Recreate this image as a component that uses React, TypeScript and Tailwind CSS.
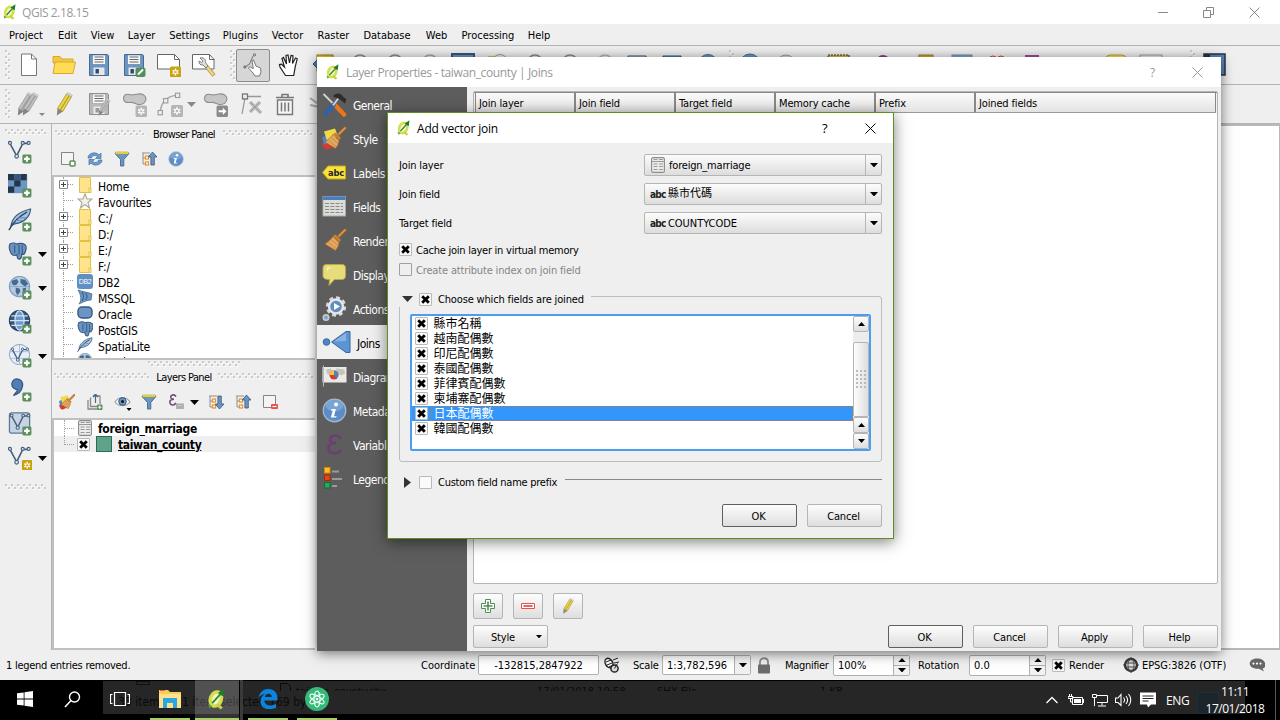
import React, { ReactNode } from "react";

type P = { children?: ReactNode };

/* ---------- primitives ---------- */

function I({ w = 24, h, v = "0 0 24 24", c = "", children }: { w?: number; h?: number; v?: string; c?: string; children?: ReactNode }) {
  return (
    <svg width={w} height={h ?? w} viewBox={v} className={"block shrink-0 " + c} fill="none">
      {children}
    </svg>
  );
}

function HGrip({ w, id }: { w: number; id: string }) {
  return (
    <svg width={w} height="7" className="block shrink-0">
      <defs>
        <pattern id={id} width="6" height="7" patternUnits="userSpaceOnUse">
          <rect x="0" y="0" width="2" height="2" fill="#cbcbcb" />
          <rect x="1" y="2" width="2" height="1" fill="#fff" />
          <rect x="3" y="3" width="2" height="2" fill="#cbcbcb" />
          <rect x="4" y="5" width="2" height="1" fill="#fff" />
        </pattern>
      </defs>
      <rect width={w} height="7" fill={"url(#" + id + ")"} />
    </svg>
  );
}

function VGrip({ id, c = "" }: { id: string; c?: string }) {
  return (
    <svg width="6" height="30" className={"block shrink-0 " + c}>
      <defs>
        <pattern id={id} width="6" height="6" patternUnits="userSpaceOnUse">
          <rect x="0" y="0" width="2" height="2" fill="#cbcbcb" />
          <rect x="1" y="2" width="2" height="1" fill="#fff" />
          <rect x="3" y="3" width="2" height="2" fill="#cbcbcb" />
          <rect x="4" y="5" width="2" height="1" fill="#fff" />
        </pattern>
      </defs>
      <rect width="6" height="30" fill={"url(#" + id + ")"} />
    </svg>
  );
}

function Down({ w = 9, f = "#000", c = "" }: { w?: number; f?: string; c?: string }) {
  return (
    <svg width={w} height={(w + 1) / 2} viewBox="0 0 10 5.5" className={"block shrink-0 " + c}>
      <path d="M0 0h10L5 5.5z" fill={f} />
    </svg>
  );
}
function Up({ w = 9, c = "" }: { w?: number; c?: string }) {
  return (
    <svg width={w} height={(w + 1) / 2} viewBox="0 0 10 5.5" className={"block shrink-0 " + c}>
      <path d="M0 5.5h10L5 0z" fill="#000" />
    </svg>
  );
}

function Check({ on = true, dim = false }: { on?: boolean; dim?: boolean }) {
  return (
    <span className={"flex h-[13px] w-[13px] shrink-0 items-center justify-center rounded-[1px] border " + (dim ? "border-[#a0a0a0] bg-[#efefef]" : "border-[#b9b9b9] bg-[#fafafa]")}>
      {on && (
        <I w={9} v="0 0 9 9">
          <path d="M1.2 1.2l6.6 6.6M7.8 1.2L1.2 7.8" stroke="#000" strokeWidth="2.8" />
        </I>
      )}
    </span>
  );
}

function Btn({ children, c = "", def = false }: P & { c?: string; def?: boolean }) {
  return (
    <div
      className={
        "flex shrink-0 items-center justify-center rounded-[2px] border bg-linear-to-b from-[#fdfdfd] to-[#dedede] " +
        (def ? "border-[#5f5f5f] " : "border-[#b5b5b5] ") + c
      }
    >
      {children}
    </div>
  );
}

/* ---------- shared icons ---------- */

const Qgis = ({ w = 16 }: { w?: number }) => (
  <I w={w} v="0 0 16 16">
    <ellipse cx="7.2" cy="8" rx="3.9" ry="5.3" transform="rotate(22 7.2 8)" stroke="#d3df4e" strokeWidth="2.6" fill="#f4f7c4" />
    <path d="M8 12l3.500 2.800" stroke="#c3d23c" strokeWidth="2.2" />
    <path d="M4.500 11L10.500 4.500" stroke="#2c8a3c" strokeWidth="1.300" />
    <path d="M8.600 3.600L13.500.3l-.8 5.900-1.600-1z" fill="#1d7a2c" />
    <path d="M1.500 11.500l1 3.200 2-1.500z" fill="#5aa04a" />
  </I>
);

const Plus = ({ x = 15, y = 15, c = "#5b8f5b" }: { x?: number; y?: number; c?: string }) => (
  <g>
    <rect x={x} y={y} width="9.4" height="9.4" rx="1.5" fill={c} />
    <path d={`M${x + 4.7} ${y + 1.8}v5.8M${x + 1.8} ${y + 4.7}h5.8`} stroke="#fff" strokeWidth="2.2" />
  </g>
);
const Star = ({ x = 14, y = 13, c = "#c9a30f" }: { x?: number; y?: number; c?: string }) => (
  <g>
    <rect x={x} y={y} width="11" height="11" rx="1.5" fill={c} />
    <path d={`M${x + 5.5} ${y + 2}v7M${x + 2.5} ${y + 3.8}l6 3.4M${x + 8.5} ${y + 3.8}l-6 3.4`} stroke="#fff" strokeWidth="1.5" />
    <circle cx={x + 5.5} cy={y + 5.5} r="1.1" fill={c} />
  </g>
);
const Floppy = ({ g = false }: { g?: boolean }) => {
  const a = g ? "#b8b8b8" : "#6b95c4";
  const b = g ? "#8f8f8f" : "#45698f";
  return (
    <g>
      <path d="M2.500 1.500h18l1 1v20h-19z" fill={a} stroke={b} />
      <rect x="5.500" y="2" width="13" height="9.500" fill="#f8f8f8" stroke={b} strokeWidth=".5" />
      <path d="M7.500 4h9M7.500 6.500h9M7.500 9h9" stroke="#666" strokeWidth="1" />
      <rect x="6.500" y="14.500" width="11" height="7.500" fill="#e8e8e8" />
      <rect x="8.500" y="16" width="3.400" height="4.500" fill={g ? "#999" : "#2d4a6b"} />
    </g>
  );
};
const Pencil = ({ g = false }: { g?: boolean }) => (
  <g>
    <path d="M5.500 16.500L14.500 2l5 2.800-8.700 14.600z" fill={g ? "#c0c0c0" : "#ead54a"} stroke={g ? "#979797" : "#a58e26"} strokeWidth=".8" />
    <path d="M8.300 18L17.300 3.500" stroke={g ? "#9a9a9a" : "#b5a02a"} strokeWidth="1.300" />
    <path d="M14.500 2l1-1.600 5 2.800-1 1.600z" fill="#d5d5d5" stroke="#a5a5a5" strokeWidth=".4" />
    <path d="M5.500 16.500l5.300 2.900-6 4.200z" fill="#858585" />
  </g>
);
const VNodes = () => (
  <g stroke="#44607e" strokeWidth="1.700">
    <path d="M2 3.500L9 16.500 15.500 3.500H21" />
    <circle cx="2" cy="3" r="1.600" fill="#dce6f0" strokeWidth="1.200" />
    <circle cx="9" cy="17" r="1.900" fill="#dce6f0" strokeWidth="1.200" />
    <circle cx="15.300" cy="3" r="1.600" fill="#dce6f0" strokeWidth="1.200" />
    <circle cx="21.500" cy="3" r="1.600" fill="#dce6f0" strokeWidth="1.200" />
  </g>
);
const Elephant = () => (
  <g>
    <path d="M2 2c3-1.600 6-1 7 .2C11 1 16 1 18 3c2 2.400.3 8-1.600 10l-2-.4c-.6 2.200.2 5-2.600 5.200-2.400 0-2.400-2.500-2.400-4.600C7.800 14 6 14 5 13.500 2.500 12 .2 6 2 2z" fill="#6a93c2" stroke="#35577e" strokeWidth="1.200" />
    <path d="M7 3.500v8M11.500 3v10M14.500 3.500c1 3 0 6 .5 9" stroke="#35577e" strokeWidth="1.100" />
  </g>
);
const Feather = () => (
  <g>
    <path d="M3 19C4 11 10 4 23.500 1 23 9 17 15 7 16.500z" fill="#a9c3df" stroke="#35577e" strokeWidth="1.200" />
    <path d="M1 23C5 15 11 9 20 4" stroke="#2d4a6b" strokeWidth="1.500" />
    <path d="M8 13l8 0M10.500 10.500l8-.5" stroke="#6a93c2" strokeWidth="1.200" />
  </g>
);
const Globe = ({ dark = false }: { dark?: boolean }) => (
  <g>
    <circle cx="12" cy="11" r="10.500" fill={dark ? "#35587f" : "#b6cbe2"} stroke={dark ? "#29415f" : "#7f9fc4"} strokeWidth="1.300" />
    {dark ? (
      <g stroke="#d6e3f2" strokeWidth="1.300">
        <ellipse cx="12" cy="11" rx="4.800" ry="10" fill="#6d9bd0" />
        <path d="M2 11h20M3.500 6h17M3.500 16h17" />
      </g>
    ) : (
      <g fill="#45698f">
        <path d="M4 5l5-2 2 3-2 3-3 1-2-2zM13 3l5 1 3 4-3 3-3-2-2-2zM8 12l4 1 1 3-3 4-2-3zM15 13l4-1-1 5-2 0z" />
        <path d="M1.500 11h21" stroke="#7f9fc4" strokeWidth=".8" />
      </g>
    )}
  </g>
);
const Funnel = ({ w = 16 }: { w?: number }) => (
  <I w={w} v="0 0 16 16">
    <path d="M1 2.500h14L9.800 8.500V15H6.500V8.500z" fill="#6b95c4" stroke="#45698f" strokeWidth=".9" />
    <path d="M1.500 1h13v2h-13z" fill="#f3e54a" stroke="#a79c2a" strokeWidth=".6" />
  </I>
);
const TreeArrow = ({ up = false }: { up?: boolean }) => (
  <I w={16} v="0 0 16 16">
    <path d="M1 2h8M2 2v11h4M2 7h4" stroke="#8e8e8e" />
    <rect x="4.500" y="5" width="3" height="3" fill="#fff" stroke="#f0922b" strokeWidth="1.200" />
    <rect x="4.500" y="11" width="3" height="3" fill="#fff" stroke="#f0922b" strokeWidth="1.200" />
    {up ? <path d="M11.500 1L16 6h-2.700v8h-3.400V6H7.300z" fill="#6b95c4" stroke="#35577e" strokeWidth=".8" /> : <path d="M11.500 15L16 10h-2.700V2h-3.400v8H7.300z" fill="#6b95c4" stroke="#35577e" strokeWidth=".8" />}
  </I>
);
const Info = ({ w = 16 }: { w?: number }) => (
  <I w={w} v="0 0 24 24">
    <circle cx="12" cy="12" r="10.800" fill="#5b8cc6" stroke="#a5b6cb" strokeWidth="1.300" />
    <ellipse cx="12" cy="7.500" rx="8.500" ry="5.500" fill="#85acd9" opacity=".7" />
    <circle cx="13.500" cy="6.300" r="1.900" fill="#fff" />
    <path d="M9 10.500h4.300L11.500 17.500h2.500l-.4 1.300H8.500L10.300 12H8.700z" fill="#fff" />
  </I>
);
const Brush = ({ colors = false }: { colors?: boolean }) => (
  <g>
    {colors && (
      <g>
        <path d="M0 17l7-5 6 8-8 3.500-3-2z" fill="#d33b32" />
        <path d="M0 11l7-4 5 8-10 3z" fill="#4f82c4" />
        <path d="M2 5L13 2l3 8-11 4z" fill="#f1d94a" />
      </g>
    )}
    <path d="M23 1.500L17 7.500" stroke="#b36a22" strokeWidth="3" strokeLinecap="round" />
    <path d="M23 1.500L17 7.500" stroke="#e09a4a" strokeWidth="1.500" strokeLinecap="round" />
    <path d="M13.500 6l5.500 5.500-1.800 2-6.200-6z" fill="#c98135" />
    <path d="M11 8l6 6c0 3-1.500 5-3.500 8L3 15.500c3-2 5.500-4.500 8-7.500z" fill="#e3a862" stroke="#a86a2a" strokeWidth=".8" />
    <path d="M6.500 14l7.500 6M9 11l7 6" stroke="#c07f3a" strokeWidth=".8" />
  </g>
);
const TableIcon = ({ w = 14, h = 16 }: { w?: number; h?: number }) => (
  <I w={w} h={h} v="0 0 14 16">
    <rect x=".6" y=".6" width="12.800" height="14.800" rx="1.500" fill="#ececea" stroke="#8c8c8c" strokeWidth="1.100" />
    <path d="M1 4.500h12" stroke="#999" />
    <path d="M2.500 2.500h4M8 2.500h4M2.500 7h4M8 7h4M2.500 9.500h4M8 9.500h4M2.500 12.500h4M8 12.500h4" stroke="#999" strokeWidth="1" />
  </I>
);
const Folder = () => (
  <I w={16} h={16} v="0 0 16 16">
    <path d="M2.500.5h11v15h-11z" fill="#ffe48c" stroke="#e3bf45" />
    <path d="M12 11h2v4.500h-2z" fill="#fff0b5" stroke="#e3bf45" />
  </I>
);

/* ---------- main window ---------- */

const menus: [string, string][] = [
  ["Project", "w-[50px]"], ["Edit", "w-[33px]"], ["View", "w-[37px]"], ["Layer", "w-[41px]"], ["Settings", "w-[55px]"],
  ["Plugins", "w-[47px]"], ["Vector", "w-[47px]"], ["Raster", "w-[45px]"], ["Database", "w-[62px]"], ["Web", "w-[37px]"],
  ["Processing", "w-[66px]"], ["Help", "w-[36px]"],
];

const Slot = ({ children, c = "w-[35px]" }: P & { c?: string }) => <div className={"flex h-full shrink-0 items-center justify-center " + c}>{children}</div>;

const Lens = ({ c }: { c: string }) => (
  <Slot>
    <I><circle cx="14" cy="9.500" r="7.500" fill="#eee" stroke={c} strokeWidth="1.500" /><path d="M9 15l-6 7" stroke={c} strokeWidth="3" /></I>
  </Slot>
);

function ToolbarOne() {
  return (
    <div className="flex h-[39px] w-[1280px] shrink-0 items-center overflow-hidden border-b border-[#b4b4b4] bg-[#efefef] pl-[5px]">
      <VGrip id="v1" />
      <Slot><I><path d="M4.500 1h10l5 5v16.500h-15z" fill="#fff" stroke="#777" /><path d="M14.500 1v5h5" stroke="#777" /></I></Slot>
      <Slot><I><path d="M1 3.500h7l2 2.500h11v4H1z" fill="#f5c63f" stroke="#d9a82e" /><path d="M1 20.500L3 9h20.500L21 20.500z" fill="#ffdc55" stroke="#d9a82e" /></I></Slot>
      <Slot><I><Floppy /></I></Slot>
      <Slot><I><Floppy /><rect x="13.500" y="14.500" width="10" height="9.500" rx="2" fill="#4f9158" /><path d="M16 21.500l5-5" stroke="#fff" strokeWidth="2" /></I></Slot>
      <Slot><I><path d="M.5 1.500h17l5 5v9.500h-22z" fill="#fff" stroke="#666" /><path d="M17.500 1.500v5h5" stroke="#666" /><Star x={13} y={13.500} /></I></Slot>
      <Slot><I><path d="M.5 1.500h17l4.500 5v9.500h-21.500z" fill="#fff" stroke="#666" /><path d="M17.500 1.500v5h5" stroke="#666" /><path d="M14 13l8 9.500" stroke="#b89a4a" strokeWidth="4" /><path d="M14.500 13.500l7 8.500" stroke="#f1d98c" strokeWidth="2" /><path d="M8 5c3-1 6 1 5.500 4.500L16 13l-2 2-3-3C8 12.500 6.500 10 7 8l2.500 1.500L11 8z" fill="#ddd" stroke="#666" strokeWidth=".8" /></I></Slot>
      <VGrip id="v2" c="ml-[9px]" />
      <div className="flex h-[33px] w-[34px] shrink-0 items-center justify-center rounded-[2px] border border-[#8c8c8c] bg-[#d6d6d6]">
        <I c="ml-[3px]"><path d="M1.500 14.500l5-3.500 3.500-8" stroke="#888" strokeWidth="1.200" /><circle cx="1.800" cy="14" r="1.100" stroke="#666" /><circle cx="11.500" cy="1.800" r="1.100" stroke="#666" /><path d="M10 20L5.500 15l1.300-1.300 3.500 2L9 7.500l1.500-.5L13 13l4.500 2 .5 4-1.500 4h-4.500z" fill="#fff" stroke="#777" strokeWidth="1" /></I>
      </div>
      <Slot c="w-[37px]"><I><path d="M8.500 22.500L3 14l-.500-2.500 2-.3L7.500 14 5 5.500l1.500-1L9.500 11 9 2.500 11 2l1.500 8L14 2.500l2 .3-.5 7.700L18.500 5l1.700.800-2 8-1.500 8.700z" fill="#fff" stroke="#222" strokeWidth="1.200" /></I></Slot>
      <Slot c="w-[33px]"><I><rect x="5" y="2" width="16" height="16" fill="#e9c52c" stroke="#8d7415" /><path d="M1 11l6-6v4h6v4H7v4z" fill="#4d7ab0" stroke="#2c4f78" /></I></Slot>
      <Lens c="#8a8a8a" /><Lens c="#8a8a8a" /><Lens c="#a5a5a5" />
      <Slot><I><path d="M1 1h22v20H1z" fill="#6b95c4" stroke="#35577e" strokeWidth="2" /></I></Slot>
      <Slot><I><rect x="2" y="3" width="12" height="12" fill="#e3c53a" /><circle cx="14" cy="9" r="7.500" fill="#eee" stroke="#999" /></I></Slot>
      <Lens c="#8a8a8a" /><Lens c="#8a8a8a" /><Lens c="#b5b5b5" />
      <Slot><I><path d="M2 3h18v16H2z" fill="#ddd" stroke="#35577e" /></I></Slot>
      <Slot><I><path d="M2 3h18v16H2z" fill="#6b95c4" stroke="#35577e" /></I></Slot>
      <Slot><I><circle cx="12" cy="11" r="9.500" fill="#6b95c4" stroke="#45698f" /></I></Slot>
      <VGrip id="v3" c="mr-[-2px] ml-[4px]" />
      <Slot><I><circle cx="11" cy="11" r="10" fill="#6b95c4" stroke="#45698f" /></I></Slot>
      <Slot><I><circle cx="12" cy="11" r="9" fill="#ddd" stroke="#999" /></I></Slot>
      <Slot c="ml-[18px] w-[35px]"><I><rect x="1" y="2" width="21" height="18" fill="#d8bd45" stroke="#333" strokeDasharray="2 1" /></I></Slot>
      <Slot c="ml-[9px] w-[35px]"><I><circle cx="12" cy="9" r="6" stroke="#7b4a7b" strokeWidth="2" /></I></Slot>
      <Slot c="ml-[9px] w-[35px]"><I><rect x="4" y="2" width="14" height="18" fill="#cfae2c" stroke="#9c821c" /></I></Slot>
      <Slot c="w-[35px]"><I><rect x="2" y="2" width="20" height="18" fill="#83a8d2" stroke="#6b8bb0" /></I></Slot>
      <Slot><I><circle cx="8" cy="7" r="4" stroke="#c44" /><circle cx="16" cy="7" r="4" stroke="#c44" /></I></Slot>
      <Slot><I><rect x="5" y="2" width="14" height="18" fill="#a548a0" /></I></Slot>
      <Slot c="ml-[49px] w-[35px]"><I><rect x="2" y="2" width="20" height="16" rx="4" fill="#f0df80" stroke="#c9a30f" /></I></Slot>
      <Slot><I><rect x="1" y="2" width="22" height="18" fill="#e7ece9" stroke="#999" /></I></Slot>
      <VGrip id="v4" c="ml-[22px]" />
      <Slot><I><path d="M2 1h21v21H2z" fill="#5c86b8" stroke="#26354a" strokeWidth="1.500" /><path d="M2 1h6v21H2z" fill="#26354a" /></I></Slot>
    </div>
  );
}

function ToolbarTwo() {
  return (
    <div className="flex h-[39px] w-[1280px] shrink-0 items-center overflow-hidden border-b border-[#b4b4b4] bg-[#efefef] pl-[5px]">
      <VGrip id="v5" />
      <Slot><I w={28} v="0 0 28 24" c="ml-[4px]"><g transform="translate(-4 0)"><Pencil g /></g><g transform="translate(1 0)"><Pencil g /></g><path d="M22 21h6l-3 3z" fill="#888" /></I></Slot>
      <Slot><I><Pencil /></I></Slot>
      <Slot><I><Floppy g /><g transform="translate(8 6) scale(.75)"><Pencil g /></g></I></Slot>
      <Slot c="w-[36px]"><I w={25}><path d="M1.500 7C1 3 4 1.500 7 2.500c3 1 5 0 8-.5 4-.8 8 1 8 4.500s-3 6-7 5.500c-3-.5-5-2.500-8-2-3 .3-6 0-6.500-3z" fill="#c6c6c6" stroke="#8b8b8b" /><Star x={13} y={13} c="#b5b5b5" /></I></Slot>
      <Slot><I w={26}><path d="M3 19C4 11 9 5 18 4" stroke="#aaa" strokeWidth="1.400" /><rect x="1" y="18" width="4" height="4" fill="#eee" stroke="#999" /><rect x="6" y="7" width="4" height="4" fill="#eee" stroke="#999" /><rect x="17" y="2" width="4" height="4" fill="#eee" stroke="#999" /><Star x={13} y={13} c="#b5b5b5" /></I></Slot>
      <Down w={9} f="#888" />
      <Slot c="ml-[2px] w-[35px]"><I w={25}><path d="M1.500 7C1 3 4 1.500 7 2.500c3 1 5 0 8-.5 4-.8 8 1 8 4.500s-3 6-7 5.500c-3-.5-5-2.500-8-2-3 .3-6 0-6.500-3z" fill="#c6c6c6" stroke="#8b8b8b" /><rect x="13" y="13" width="11" height="11" rx="1.500" fill="#8b8b8b" /><path d="M15 17.500h4v-2.500l3.500 3.500-3.500 3.500v-2.500h-4z" fill="#fff" /></I></Slot>
      <Slot><I><path d="M3 22L6 6M8 4.500h14" stroke="#999" strokeWidth="1.300" /><rect x="3.500" y="2" width="5" height="5" stroke="#777" strokeWidth="1.300" /><path d="M11 20L21 10M11 10l11 11" stroke="#bdbdbd" strokeWidth="3.500" /><path d="M11 20L21 10M11 10l11 11" stroke="#999" strokeWidth="1" /></I></Slot>
      <Slot c="w-[34px]"><I><path d="M4.500 8h15v14.500h-15z" fill="#f4f4f4" stroke="#777" strokeWidth="1.400" /><path d="M3 5.500h18M9 5.500V2.500h6v3" stroke="#777" strokeWidth="1.600" /><path d="M8.500 10.500v9M12 10.500v9M15.500 10.500v9" stroke="#777" strokeWidth="1.500" /></I></Slot>
      <Slot><I><path d="M2 6l14 10M2 13l14 3" stroke="#aaa" strokeWidth="2" /></I></Slot>
    </div>
  );
}

function SideTools() {
  const items: [ReactNode, boolean][] = [
    [<><VNodes /><Plus /></>, false],
    [<><path d="M0 0h20v20H0z" fill="#6b95c4" /><path d="M0 0h6.500v6.500H0zM13 0h6.500v6.500H13zM6.500 6.500H13V13H6.500zM0 13h6.500v6.500H0z" fill="#26354a" /><path d="M6.500 0H13v6.500H6.500z" fill="#35577e" /><Plus /></>, false],
    [<><Feather /><Plus /></>, false],
    [<><Elephant /><Plus /></>, true],
    [<><Globe /><Plus /></>, true],
    [<><Globe dark /><Plus /></>, false],
    [<><circle cx="12" cy="11" r="10.500" fill="#e9eff6" stroke="#7f9fc4" /><path d="M2 8h20M2 15h20M12 1v20" stroke="#a8bfda" /><g transform="translate(3 3) scale(.8)"><VNodes /></g><Plus /></>, true],
    [<><path d="M9 1c5 0 7 4 6 8-1 5-5 8-9 9-.5-1 4-3 4-6-3 0-6-2-6-5.500S6.500 1 9 1z" fill="#4f7fb5" stroke="#35577e" strokeWidth="1.300" /><Plus /></>, false],
    [<><rect x="1.500" y="1" width="21" height="21" rx="2" fill="#c7d4e3" stroke="#5c7693" strokeWidth="1.300" /><g transform="translate(2 1) scale(.9)"><VNodes /></g><Plus /></>, false],
    [<><VNodes /><Star x={14.500} y={14.500} /></>, true],
  ];
  return (
    <div className="flex w-[52px] shrink-0 flex-col border-r border-[#b4b4b4]">
      <div className="flex h-[11px] shrink-0 items-start pt-[5px] pl-[5px]"><HGrip w={41} id="s1" /></div>
      {items.map(([ic, dd], i) => (
        <div key={i} className="flex h-[34px] shrink-0 items-center pl-[8px]">
          <I w={24} v="0 0 25 25">{ic}</I>
          {dd && <Down c="ml-[6px]" />}
        </div>
      ))}
      <div className="mt-[9px] pl-[5px]"><HGrip w={41} id="s2" /></div>
    </div>
  );
}

const tree: [string, string, boolean][] = [
  ["Home", "f", true], ["Favourites", "star", false], ["C:/", "f", true], ["D:/", "f", true], ["E:/", "f", true], ["F:/", "f", true],
  ["DB2", "db2", false], ["MSSQL", "ms", false], ["Oracle", "ora", false], ["PostGIS", "pg", false], ["SpatiaLite", "sl", false], ["ArcGisFeatureServer", "arc", false],
];
const treeIcon: Record<string, ReactNode> = {
  f: <Folder />,
  star: <I w={16} v="0 0 16 16"><path d="M8 1l2 5h5l-4 3.500L12.500 15 8 11.500 3.500 15 5 9.500 1 6h5z" fill="#f2f2ea" stroke="#aaa995" strokeWidth="1.100" /></I>,
  db2: <div className="flex h-[15px] w-[16px] items-center justify-center rounded-[3px] bg-[#5f8fc4] font-['Liberation_Sans'] text-[7px] tracking-[-0.3px] text-white">DB2</div>,
  ms: <I w={16} v="0 0 16 16"><path d="M1 1c5 2 10 2 14 4l-1 6c-4 0-8 2-12 4 3-4 2-9-1-14z" fill="#6b95c4" stroke="#45698f" strokeWidth=".8" /><path d="M5 3c2 3 2 6 0 9M8.500 4c2 2 2 5 0 7" stroke="#2f527b" /></I>,
  ora: <I w={16} v="0 0 16 16"><rect x="1" y="2" width="14" height="11" rx="4" fill="#6b95c4" stroke="#35577e" strokeWidth="1.400" /></I>,
  pg: <I w={16} v="0 0 19 19"><Elephant /></I>,
  sl: <I w={16} v="0 0 25 25"><Feather /></I>,
  arc: <I w={16} v="0 0 24 24"><Globe /></I>,
};

function Panels() {
  return (
    <div className="flex w-[263px] shrink-0 flex-col">
      <div className="flex h-[18px] shrink-0 items-center pl-[3px]">
        <HGrip w={90} id="p1" />
        <span className="w-[78px] pt-[2px] text-center tracking-[-0.6px]">Browser Panel</span>
        <HGrip w={90} id="p2" />
      </div>
      <div className="flex h-[33px] shrink-0 items-center gap-[11px] pl-[8px]">
        <I w={16} v="0 0 16 16"><path d="M1.500 1.500h12v12h-12z" fill="#f4f4f4" stroke="#858585" /><rect x="10" y="10" width="5" height="5" rx="1" fill="#fff" stroke="#5b8f5b" strokeWidth="1.500" /></I>
        <I w={16} v="0 0 16 16"><path d="M1 7c0-5 8-7 11-3l2-2v5.500H8.500l2-2C8.500 4 5 4 4.500 7z" fill="#6b9bd0" stroke="#45729f" strokeWidth=".7" /><path d="M15 9c0 5-8 7-11 3l-2 2V8.500h5.500l-2 2C7.500 12 11 12 11.500 9z" fill="#6b9bd0" stroke="#45729f" strokeWidth=".7" /></I>
        <Funnel />
        <TreeArrow up />
        <Info />
      </div>
      <div className="flex h-[185px] shrink-0 flex-col overflow-hidden border-2 border-r-0 border-[#c0c0c0] bg-white pl-[3px]">
        {tree.map(([t, ic, ex]) => (
          <div key={t} className="flex h-[16px] shrink-0 items-center">
            <div className="relative h-[16px] w-[20px] shrink-0">
              <div className="absolute top-0 left-[6px] h-[16px] border-l border-dotted border-[#a0a0a0]" />
              <div className="absolute top-[7px] left-[7px] w-[9px] border-t border-dotted border-[#a0a0a0]" />
              {ex && (
                <I w={9} v="0 0 9 9" c="absolute top-[3px] left-[2px]"><path d="M.5.5h8v8h-8z" fill="#fff" stroke="#888" /><path d="M2 4.500h5M4.500 2v5" stroke="#444" /></I>
              )}
            </div>
            {treeIcon[ic]}
            <span className="ml-[5px] pt-[4px] text-[12px] tracking-[-0.2px] whitespace-nowrap">{t}</span>
          </div>
        ))}
      </div>
      <div className="flex h-[9px] shrink-0 pt-[1px] pl-[96px]"><HGrip w={93} id="p3" /></div>
      <div className="flex h-[15px] shrink-0 items-center pl-[2px]">
        <HGrip w={96} id="p4" />
        <span className="w-[68px] pt-[2px] text-center tracking-[-0.6px]">Layers Panel</span>
        <HGrip w={95} id="p5" />
      </div>
      <div className="flex h-[34px] shrink-0 items-center pt-[2px] pl-[7px]">
        <I w={16} v="0 0 24 24" c="mr-[11px]"><Brush colors /></I>
        <I w={17} v="0 0 17 17" c="mr-[11px]"><path d="M2 6v9h9M4.500 3.500v9h8M7 2h7v8" stroke="#888" strokeWidth="1.300" /><path d="M9.500 0v9M7 3l2.500-3L12 3" stroke="#45698f" strokeWidth="1.200" /><rect x="11" y="10.500" width="5.500" height="5.500" rx="1" fill="#5b8f5b" /><path d="M12 13.200h3.500M13.700 11.500V15" stroke="#fff" /></I>
        <I w={18} v="0 0 18 18" c="mr-[9px]"><path d="M1 9c4-6 11-6 15 0-4 5-11 5-15 0z" fill="#fff" stroke="#999" strokeWidth="1.200" /><circle cx="8.500" cy="8.500" r="3.800" fill="#6b95c4" stroke="#35577e" /><circle cx="8.500" cy="8.500" r="1.500" fill="#111" /><path d="M12.500 15h5l-2.500 3z" fill="#000" /></I>
        <Funnel />
        <I w={17} v="0 0 17 17" c="mr-[5px] ml-[11px]"><path d="M8 2.500C6-.5 2 1 3 4c.5 1.200 2 1.300 3 1.300C3 5.300 1.500 6.500 2 9c1 3 4.500 2.500 6 0" stroke="#70497a" strokeWidth="1.600" /><path d="M9 15v-4.500h6V15M11 15v-2h2v2" stroke="#aaa" strokeWidth="1.800" /></I>
        <Down c="mr-[9px]" />
        <TreeArrow />
        <span className="w-[11px]" />
        <TreeArrow up />
        <I w={16} v="0 0 16 16" c="ml-[11px]"><path d="M1.500 1.500h12v12h-12z" fill="#f4f4f4" stroke="#858585" /><rect x="9" y="10" width="7" height="5" rx="1" fill="#e9504f" /><path d="M10.500 12.500h4" stroke="#fff" strokeWidth="1.200" /></I>
      </div>
      <div className="flex grow flex-col border-2 border-r-0 border-[#c0c0c0] bg-white text-[12px] font-bold tracking-[-0.35px]">
        <div className="flex h-[16px] items-center pl-[10px]">
          <div className="h-[16px] border-l border-dotted border-[#a0a0a0]" />
          <div className="mr-[4px] w-[9px] border-t border-dotted border-[#a0a0a0]" />
          <TableIcon w={14} h={16} />
          <span className="ml-[6px] pt-[2px] leading-[17px]">foreign_marriage</span>
        </div>
        <div className="flex h-[16px] items-center bg-[#efefef] pl-[10px]">
          <div className="h-[9px] w-[10px] self-start border-b border-l border-dotted border-[#a0a0a0]" />
          <span className="ml-[3px]"><Check /></span>
          <span className="ml-[6px] h-[16px] w-[16px] border border-[#2f6a58] bg-[#5fa389]" />
          <span className="ml-[6px] pt-[2px] leading-[17px] underline">taiwan_county</span>
        </div>
      </div>
    </div>
  );
}

function Spin({ v, c }: { v: string; c: string }) {
  return (
    <div className={"flex h-[21px] shrink-0 rounded-[2px] border border-[#b0b0b0] bg-white " + c}>
      <span className="grow pl-[4px] leading-[20px]">{v}</span>
      <div className="flex w-[16px] flex-col border-l border-[#b0b0b0] bg-[#f2f2f2]">
        <div className="flex h-[10px] items-center justify-center border-b border-[#b0b0b0]"><Up w={8} /></div>
        <div className="flex h-[9px] items-center justify-center"><Down w={8} /></div>
      </div>
    </div>
  );
}

function StatusBar() {
  return (
    <div className="flex h-[30px] shrink-0 items-center bg-[#efefef] pl-[6px] tracking-normal">
      <span className="w-[415px] tracking-[-0.26px]">1 legend entries removed.</span>
      <span className="w-[57px]">Coordinate</span>
      <div className="h-[20px] w-[121px] rounded-[2px] border border-[#b0b0b0] bg-white text-center leading-[20px]">-132815,2847922</div>
      <I w={16} v="0 0 16 16" c="ml-[5px]"><ellipse cx="5" cy="6" rx="3.600" ry="5" transform="rotate(-30 5 6)" fill="#fff" stroke="#222" strokeWidth="1.500" /><path d="M2 5l5-2M3 8l5-2M5 10l4-2M9 3l5-2M10 6l5-1" stroke="#222" /><circle cx="10.500" cy="11.500" r="3.600" fill="#ddd" stroke="#222" strokeWidth="1.500" /><path d="M10.500 11.500l3-5" stroke="#222" /></I>
      <span className="ml-[13px] w-[29px] tracking-[-0.2px]">Scale</span>
      <div className="flex h-[20px] w-[89px] rounded-[2px] border border-[#b0b0b0] bg-white">
        <span className="grow pl-[4px] leading-[20px]">1:3,782,596</span>
        <div className="flex w-[16px] items-center justify-center border-l border-[#b0b0b0] bg-[#f0f0f0]"><Down w={8} /></div>
      </div>
      <I w={14} h={17} v="0 0 14 17" c="ml-[6px]"><path d="M3 8V5c0-5 8-5 8 0v3" stroke="#8a8a8a" strokeWidth="1.800" /><rect x="1" y="7.500" width="12" height="9" rx="1" fill="#6c6c6c" /></I>
      <span className="ml-[14px] w-[48px] tracking-[-0.3px]">Magnifier</span>
      <Spin v="100%" c="w-[77px]" />
      <span className="ml-[8px] w-[51px]">Rotation</span>
      <Spin v="0.0" c="w-[77px]" />
      <span className="ml-[6px]"><Check /></span>
      <span className="ml-[4px] w-[54px]">Render</span>
      <I w={16} v="0 0 16 16"><circle cx="8" cy="8" r="6" fill="#ddd" stroke="#333" strokeWidth="2.400" /><ellipse cx="8" cy="8" rx="3" ry="6" stroke="#555" /><path d="M2 6h12M2 10h12M8 0v3M8 13v3M0 8h2M14 8h2" stroke="#444" strokeWidth="1.100" /></I>
      <span className="ml-[3px] w-[107px] tracking-[-0.05px]">EPSG:3826 (OTF)</span>
      <I w={16} h={14} v="0 0 16 14"><path d="M8 .5c10 0 10 10 5.500 10L15 13.500l-5-2.700C-2 11.500-2 .5 8 .5z" fill="#666" /><circle cx="4.500" cy="5.600" r="1.100" fill="#fff" /><circle cx="8" cy="5.600" r="1.100" fill="#fff" /><circle cx="11.500" cy="5.600" r="1.100" fill="#fff" /></I>
    </div>
  );
}

/* ---------- layer properties window ---------- */

const nav: [string, ReactNode][] = [
  ["General", <><path d="M1.500 1.500l12 12" stroke="#d5d5d5" strokeWidth="1.800" /><path d="M14 13.500l8 8.500" stroke="#e8761c" strokeWidth="4.500" strokeLinecap="round" /><path d="M11.500 12.500L3.500 21" stroke="#2f62a8" strokeWidth="4.500" strokeLinecap="round" /><path d="M11 13l6-8" stroke="#ccc" strokeWidth="2" /><path d="M11 4c2-3.500 7-4 9.500-.5L24.500 7l-1.500 4-5-4-3-1.500z" fill="#2d2d2d" /></>],
  ["Style", <Brush colors />],
  ["Labels", <><path d="M6 5.500h17.500v13H6L.5 12z" fill="#fbe23a" stroke="#c7a617" /><text x="6" y="15.500" fontSize="9.500" fontWeight="bold" fill="#222" fontFamily="DejaVu Sans Condensed, DejaVu Sans, sans-serif" textLength="16" lengthAdjust="spacingAndGlyphs">abc</text></>],
  ["Fields", <><rect x="1" y="2" width="22.500" height="19.500" fill="#dcdcd8" stroke="#aaa" /><rect x="1" y="2" width="22.500" height="3.500" fill="#4a7ebb" /><path d="M3 9h18M3 12h18M3 15h18M3 18h18" stroke="#8a8a8a" strokeWidth="1.200" strokeDasharray="4 1.300" /></>],
  ["Rendering", <Brush />],
  ["Display", <><path d="M5 2h15c3 0 3.500 2 3.500 4v7c0 3-1.500 4-4 4h-7l-5.500 6 .5-6C3 17 1 16 1 13V6c0-3 1-4 4-4z" fill="#e6dc7c" stroke="#b5a93f" /><path d="M5 5h7c-5 0-7 2-7 5z" fill="#fbf8d8" /></>],
  ["Actions", <><circle cx="14" cy="10" r="8.700" stroke="#d8d8d8" strokeWidth="3" strokeDasharray="3.800 3" /><circle cx="14" cy="10" r="7" fill="#5b8cc6" stroke="#e6e6e6" strokeWidth="2.500" /><path d="M12 6.500l6 3.500-6 3.500z" fill="#fff" /><circle cx="4" cy="21" r="2.700" fill="#7aa3d3" stroke="#ccc" strokeWidth="1.600" /></>],
  ["Joins", null],
  ["Diagrams", <><rect x=".5" y="2.500" width="24" height="15.500" fill="#e9e9e5" /><path d="M4 5l5-1 2 4-3 3-3-2zM14 4l8 1 1 4-4 2-4-3z" fill="#c4c4bc" /><path d="M1.500 1v21" stroke="#bbb" /><circle cx="12" cy="10.500" r="4.500" fill="#d93a2f" /><path d="M12 6v4.500H7.500A4.500 4.500 0 0 1 12 6z" fill="#f1cb3d" /><path d="M12 6a4.500 4.500 0 0 1 4.500 4.500l-2 3.500-2.500-3.500z" fill="#4b82c2" /></>],
  ["Metadata", null],
  ["Variables", <path d="M18.500 6.500C18 2 9 1.500 8 6.500c-.5 3.500 3.500 4.500 6 4-4-.5-8 1.500-7.500 6 1 6 10.500 5 12.500.5" stroke="#6b3f72" strokeWidth="2.600" />],
  ["Legend", <><rect x="2.500" y="1" width="5.500" height="5.500" fill="#f8c51c" stroke="#e57f10" /><rect x="2.500" y="8.500" width="5.500" height="5.500" fill="#e8431a" stroke="#a82a08" /><rect x="2.500" y="16" width="5.500" height="5.500" fill="#2ba55a" stroke="#0d7034" /><path d="M10 5h7M10 12.500h10M10 19.500h5" stroke="#9a9a9a" strokeWidth="2" /></>],
];

const cols: [string, string][] = [["Join layer", "w-[100px]"], ["Join field", "w-[100px]"], ["Target field", "w-[100px]"], ["Memory cache", "w-[100px]"], ["Prefix", "w-[100px]"], ["Joined fields", "w-[241px]"]];

function PropertiesWindow() {
  return (
    <div className="absolute top-[57px] left-[317px] flex h-[594px] w-[904px] flex-col bg-[#efefef] shadow-[0_2px_12px_rgba(0,0,0,0.55)]">
      <div className="flex h-[30px] shrink-0 items-center bg-white pl-[8px] font-['Open_Sans',sans-serif] text-[12px] text-[#999]">
        <Qgis />
        <span className="ml-[5px] grow tracking-[-0.38px]">Layer Properties - taiwan_county | Joins</span>
        <span className="w-[42px] text-[12px]">?</span>
        <I w={11} v="0 0 11 11" c="mr-[18px]"><path d="M.5.5l10 10M10.500.5l-10 10" stroke="#999" /></I>
      </div>
      <div className="flex grow">
        <div className="flex w-[150px] shrink-0 flex-col bg-[#5d5d5d]">
          {nav.map(([t, ic]) => (
            <div key={t} className={"flex h-[34px] items-center pl-[5px] " + (t === "Joins" ? "bg-[#efefef] text-black" : "text-white")}>
              {t === "Joins" ? (
                <I w={29} h={24} v="0 0 29 24"><circle cx="4.500" cy="12" r="3.300" fill="#4f86c6" stroke="#35699f" /><path d="M9.500 12L24 1.500h4v21h-4z" fill="#5c94d4" stroke="#35699f" /><path d="M12 11.500L24 3v8z" fill="#8ab3e2" /></I>
              ) : t === "Metadata" ? (
                <Info w={25} />
              ) : (
                <I w={25} v="0 0 25 24">{ic}</I>
              )}
              <span className="ml-[6px] pt-[4px] text-[12px] tracking-[-0.5px]">{t}</span>
            </div>
          ))}
        </div>
        <div className="flex grow flex-col pt-[4px] pr-[3px] pl-[6px]">
          <div className="flex h-[493px] flex-col rounded-[2px] border border-[#b5b5b5] bg-white">
            <div className="flex h-[21px] border-t border-[#888] bg-[#efefef] px-[1px]">
              {cols.map(([t, w]) => (
                <div key={t} className={"h-[20px] shrink-0 border-r border-b border-l border-r-[#888] border-b-[#999] border-l-[#888] bg-linear-to-b from-[#fbfbfb] to-[#e3e3e3] pl-[3px] text-[11px] leading-[21px] tracking-[-0.15px] " + w}>{t}</div>
              ))}
            </div>
          </div>
          <div className="mt-[9px] flex gap-[10px]">
            <Btn c="h-[26px] w-[30px]"><I w={14} v="0 0 14 14"><path d="M4.500.5h5v4h4v5h-4v4h-5v-4h-4v-5h4z" fill="#fff" stroke="#4f8f58" /><path d="M7 2.500v9M2.500 7h9" stroke="#4f8f58" strokeWidth="1.600" /></I></Btn>
            <Btn c="h-[26px] w-[30px]"><I w={14} v="0 0 14 14"><path d="M.5 4.500h13v5H.5z" fill="#fff" stroke="#e9504f" /><path d="M2.500 7h9" stroke="#e9504f" strokeWidth="1.800" /></I></Btn>
            <Btn c="h-[26px] w-[30px]"><I w={16}><Pencil /></I></Btn>
          </div>
          <div className="mt-[6px] flex">
            <Btn c="h-[23px] w-[75px] pl-[15px]"><span className="w-[45px] pt-[2px]">Style</span><Down w={6} c="mr-[3px]" /></Btn>
            <div className="ml-auto flex gap-[10px]">
              <Btn def c="h-[23px] w-[75px] pt-[2px] pr-[2px]">OK</Btn>
              <Btn c="h-[23px] w-[75px] pt-[2px] pr-[2px]">Cancel</Btn>
              <Btn c="h-[23px] w-[75px] pt-[2px] pr-[2px]">Apply</Btn>
              <Btn c="h-[23px] w-[75px] pt-[2px] pr-[2px]">Help</Btn>
            </div>
          </div>
        </div>
      </div>
    </div>
  );
}

/* ---------- add vector join dialog ---------- */

function Combo({ children }: P) {
  return (
    <div className="flex h-[22px] w-[238px] items-center rounded-[2px] border border-[#b5b5b5] bg-linear-to-b from-[#fcfcfc] to-[#dddddd]">
      <div className="flex grow items-center">{children}</div>
      <div className="flex h-[20px] w-[16px] items-center justify-center border-l border-[#b5b5b5]"><Down w={8} /></div>
    </div>
  );
}
const Abc = () => <span className="ml-[5px] w-[18px] text-[10px] font-bold tracking-[-0.8px] text-[#222]">abc</span>;

const fields = ["縣市名稱", "越南配偶數", "印尼配偶數", "泰國配偶數", "菲律賓配偶數", "柬埔寨配偶數", "日本配偶數", "韓國配偶數"];

function JoinDialog() {
  return (
    <div className="absolute top-[112px] left-[387px] flex h-[427px] w-[507px] flex-col border border-[#5c8f1f] bg-[#efefef] tracking-[-0.16px] shadow-[0_3px_14px_rgba(0,0,0,0.5)]">
      <div className="flex h-[30px] shrink-0 items-center bg-white pl-[8px] font-['Open_Sans',sans-serif] text-[12px] text-black">
        <Qgis />
        <span className="ml-[5px] grow tracking-[-0.2px]">Add vector join</span>
        <span className="w-[43px] text-[13px]">?</span>
        <I w={11} v="0 0 11 11" c="mr-[17px]"><path d="M.5.5l10 10M10.500.5l-10 10" stroke="#000" /></I>
      </div>
      <div className="flex grow flex-col pt-[11px] pr-[11px] pl-[11px]">
        <div className="flex flex-col gap-[7px]">
          <div className="flex items-center justify-between"><span>Join layer</span><Combo><span className="ml-[6px]"><TableIcon w={14} h={16} /></span><span className="ml-[4px] tracking-[-0.2px]">foreign_marriage</span></Combo></div>
          <div className="flex items-center justify-between"><span>Join field</span><Combo><Abc /><span className="text-[11px] leading-[20px] tracking-normal">縣市代碼</span></Combo></div>
          <div className="flex items-center justify-between"><span>Target field</span><Combo><Abc /><span className="tracking-[-0.05px]">COUNTYCODE</span></Combo></div>
        </div>
        <div className="mt-[8px] flex h-[15px] items-center"><Check /><span className="ml-[4px] pt-[2px] tracking-[-0.25px]">Cache join layer in virtual memory</span></div>
        <div className="mt-[5px] flex h-[15px] items-center text-[#858585]"><Check on={false} dim /><span className="ml-[4px] pt-[2px]">Create attribute index on join field</span></div>

        <div className="mt-[19px] flex h-[166px] flex-col rounded-[3px] border border-[#bdbdbd] px-[10px]">
          <div className="mt-[-6px] ml-[-12px] flex h-[16px] w-[193px] items-center bg-[#efefef] pl-[4px]">
            <Down w={11} f="#333" />
            <span className="ml-[6px]"><Check /></span>
            <span className="ml-[6px]">Choose which fields are joined</span>
          </div>
          <div className="mt-[7px] flex h-[137px] w-[461px] rounded-[2px] border-2 border-[#4a9df0] bg-white">
            <div className="flex grow flex-col">
              {fields.map((f) => {
                const sel = f === "日本配偶數";
                return (
                  <div key={f} className={"flex h-[15px] shrink-0 items-center pl-[3px] " + (sel ? "bg-[#3296fd] text-white" : "text-black")}>
                    <Check />
                    <span className={"ml-[3px] h-[15px] grow border pl-[1.500px] text-[12px] leading-[15px] tracking-normal " + (sel ? "border-dotted border-[#c8782a]" : "border-transparent")}>{f}</span>
                  </div>
                );
              })}
            </div>
            <div className="flex w-[16px] flex-col bg-[#f0f0f0]">
              <Btn c="h-[16px] border-[#888]"><Up w={7} /></Btn>
              <div className="h-[10px] bg-[#ededed]" />
              <Btn c="h-[75px] border-[#888] bg-linear-to-r">
                <svg width="11" height="19" className="block"><defs><pattern id="dt" width="4" height="4" patternUnits="userSpaceOnUse"><rect width="2" height="2" fill="#bbb" /></pattern></defs><rect width="11" height="19" fill="url(#dt)" /></svg>
              </Btn>
              <Btn c="h-[16px] border-[#888]"><Up w={7} /></Btn>
              <Btn c="h-[16px] border-[#888]"><Down w={7} /></Btn>
            </div>
          </div>
        </div>

        <div className="mt-[12px] flex h-[16px] items-center pl-[5px]">
          <I w={7} h={11} v="0 0 7 11"><path d="M0 0v11L7 5.500z" fill="#333" /></I>
          <span className="ml-[8px]"><Check on={false} /></span>
          <span className="ml-[6px] w-[127px] tracking-[-0.25px]">Custom field name prefix</span>
          <span className="mb-[5px] h-px grow bg-[#888]" />
        </div>
        <div className="mt-[14px] flex justify-end gap-[10px]">
          <Btn def c="h-[23px] w-[75px] pt-[2px] pr-[2px]">OK</Btn>
          <Btn c="h-[23px] w-[75px] pt-[2px] pr-[2px]">Cancel</Btn>
        </div>
      </div>
    </div>
  );
}

/* ---------- taskbar ---------- */

const Task = ({ children, c = "w-[49px]", line = true, on = false }: P & { c?: string; line?: boolean; on?: boolean }) => (
  <div className={"flex h-[40px] shrink-0 flex-col items-center " + c + (on ? " bg-white/20" : "")}>
    <div className="flex grow items-center">{children}</div>
    <div className={"h-[2px] " + (on ? "w-full " : "w-[40px] ") + (line ? "bg-[#a5d165]" : "")} />
  </div>
);

function Taskbar() {
  return (
    <div className="relative flex h-[40px] shrink-0 bg-black text-white">
      <div className="absolute top-[1px] left-[103px] h-[33px] w-[1142px] overflow-hidden bg-[#262626] tracking-normal text-[#0a0a0a]">
        <div className="absolute top-0 left-[33px] h-[4px] w-[14px] border border-[#111]" />
        <div className="absolute top-0 left-0 h-[10px] w-full overflow-hidden">
          <I w={11} h={12} v="0 0 11 12" c="absolute top-[2px] left-[177px]"><path d="M.5.5h7l3 3v8H.5z" stroke="#0a0a0a" /></I>
          <span className="absolute top-[3px] left-[193px] whitespace-nowrap">taiwan_county.shx</span>
          <span className="absolute top-[3px] left-[434px] whitespace-nowrap">17/01/2018 10:58</span>
          <span className="absolute top-[3px] left-[554px] whitespace-nowrap">SHX File</span>
          <span className="absolute top-[3px] left-[717px] whitespace-nowrap">1 KB</span>
        </div>
        <div className="absolute top-[14px] left-[15px] text-[12px] whitespace-nowrap">33 items</div>
        <div className="absolute top-[14px] left-[79px] text-[12px] whitespace-nowrap">1 item selected 169 bytes</div>
        <div className="absolute top-[11px] left-[1094px] h-[22px] w-[22px] border border-[#163240] bg-[#1c2529]" />
      </div>
      <div className="relative flex grow">
        <Task line={false}><I w={16} v="0 0 16 16"><path d="M0 2.300l6.700-.9v6.200H0zM7.500 1.300L16 0v7.600H7.500zM0 8.400h6.700v6.200L0 13.700zM7.500 8.400H16V16l-8.500-1.200z" fill="#fff" /></I></Task>
        <Task line={false} c="w-[47px]"><I w={17} v="0 0 17 17"><circle cx="10.500" cy="6" r="5" stroke="#fff" strokeWidth="1.400" /><path d="M7 9.500L1 16" stroke="#fff" strokeWidth="1.500" /></I></Task>
        <Task line={false} c="w-[48px]"><I w={20} h={16} v="0 0 20 16"><path d="M4.500 1.500h11v13h-11zM2.500 3.500h-2v9h2M17.500 3.500h2v9h-2" stroke="#fff" strokeWidth="1.200" /></I></Task>
        <Task c="w-[51px]"><I w={22} h={20} v="0 0 22 20"><path d="M0 1h9l2 2h11v16H0z" fill="#f7cd5a" /><path d="M0 5h22v14H0z" fill="#ffe18c" /><path d="M4 9h14v10h-4v-5H8v5H4z" fill="#2aa6e0" /><path d="M1 1.500h5" stroke="#f05b3b" /></I></Task>
        <Task on c="w-[44px]"><Qgis w={22} /></Task>
        <div className="mr-[1px] h-[40px] w-[4px] border-l border-black bg-[#3a3a3a]" />
        <Task c="w-[48px]"><I w={20} v="0 0 20 20"><path d="M.5 9C2 2 6 0 10.500 0 16 0 19.500 4 19.500 9v2.500H6.500c0 5.500 7 6 11.500 3.500v4C9 22 2.500 19 2.500 12.500 2.500 9 4.500 6.500 7 5 3.500 5.500 1.500 7 .5 9zM6.800 8h7c0-4.500-6.300-4.500-7 0z" fill="#0a84e0" /></I></Task>
        <Task c="w-[50px]"><I w={24}><circle cx="12" cy="12" r="12" fill="#35b878" /><g stroke="#e8fff2" strokeWidth="1.100"><ellipse cx="12" cy="12" rx="3" ry="8" /><ellipse cx="12" cy="12" rx="3" ry="8" transform="rotate(60 12 12)" /><ellipse cx="12" cy="12" rx="3" ry="8" transform="rotate(120 12 12)" /></g><circle cx="12" cy="12" r="1.300" fill="#fff" /></I></Task>
        <div className="ml-auto flex items-center">
          <I w={12} h={8} v="0 0 12 8" c="mr-[10px]"><path d="M.5 7L6 1.500 11.500 7" stroke="#fff" strokeWidth="1.300" /></I>
          <I w={16} h={12} v="0 0 16 12" c="mr-[8px]"><path d="M4.500 3.500h10v7h-10z" stroke="#fff" /><path d="M6 5h7v4H6z" fill="#fff" /><path d="M15.500 5v4M0 2.500h5v2H0zM1.500 0v3M3.500 0v3M2.500 4v4h2" stroke="#fff" /></I>
          <I w={16} h={14} v="0 0 16 14" c="mr-[7px]"><path d="M5 2.500h10.500v7H5M10 9.500v3M6 13h8M.5 1.500h4v3h-4zM2.500 4.500V13" stroke="#fff" /></I>
          <I w={17} h={14} v="0 0 17 14" c="mr-[8px]"><path d="M.5 5h2.500l3-3.500v11L3 9.500H.500zM8.500 4.500c1.300 1.500 1.300 3.500 0 5M11 3c2 2.500 2 5.500 0 8M13.500 1c3 3.500 3 8.500 0 12" stroke="#fff" strokeWidth="1.100" /></I>
          <I w={16} h={16} v="0 0 16 16"><path d="M0 .5h16v12h-5L8 15.500l-1-3H0z" fill="#fff" /><path d="M2.500 4h11M2.500 6.500h11M2.500 9h6" stroke="#222" strokeWidth="1" /></I>
          <span className="ml-[10px] w-[31px] font-['Open_Sans',sans-serif] text-[12px] tracking-[-0.4px]">ENG</span>
          <div className="flex w-[78px] flex-col items-center pr-[2px] font-['Open_Sans',sans-serif] text-[12px] leading-[17px] tracking-[-0.48px]"><span>11:11</span><span>17/01/2018</span></div>
          <div className="mr-[4px] h-[40px] w-px bg-[#555]" />
        </div>
      </div>
    </div>
  );
}

export default function App() {
  return (
    <div className="relative flex h-[720px] w-[1280px] flex-col overflow-hidden bg-[#efefef] font-['DejaVu_Sans_Condensed','Noto_Sans_CJK_TC',sans-serif] text-[11px] leading-[15px] tracking-[-0.2px] text-black">
      <div className="flex h-[24px] shrink-0 items-center bg-white pl-[2px] font-['Open_Sans',sans-serif] text-[12px] text-[#999]">
        <Qgis />
        <span className="ml-[4px] grow tracking-[-0.45px]">QGIS 2.18.15</span>
        <I w={10} v="0 0 10 10"><path d="M0 5.500h10" stroke="#888" /></I>
        <I w={11} v="0 0 11 11" c="ml-[35px]"><path d="M.5 3.500h7v7h-7zM3.500 3V.5h7v7H8" stroke="#888" /></I>
        <I w={11} v="0 0 11 11" c="mr-[20px] ml-[35px]"><path d="M.5.5l10 10M10.500.5l-10 10" stroke="#888" /></I>
      </div>
      <div className="flex h-[22px] shrink-0 items-center border-b border-[#b4b4b4] bg-[#efefef] pt-[2px] pl-[1px] tracking-normal">
        {menus.map(([m, w]) => (
          <span key={m} className={"shrink-0 text-center " + w}>{m}</span>
        ))}
      </div>
      <ToolbarOne />
      <ToolbarTwo />
      <div className="flex h-[526px] shrink-0">
        <SideTools />
        <Panels />
        <div className="ml-[2px] grow border-2 border-r-[1px] border-[#b8b8b8] bg-white" />
      </div>
      <StatusBar />
      <Taskbar />
      <PropertiesWindow />
      <JoinDialog />
    </div>
  );
}
